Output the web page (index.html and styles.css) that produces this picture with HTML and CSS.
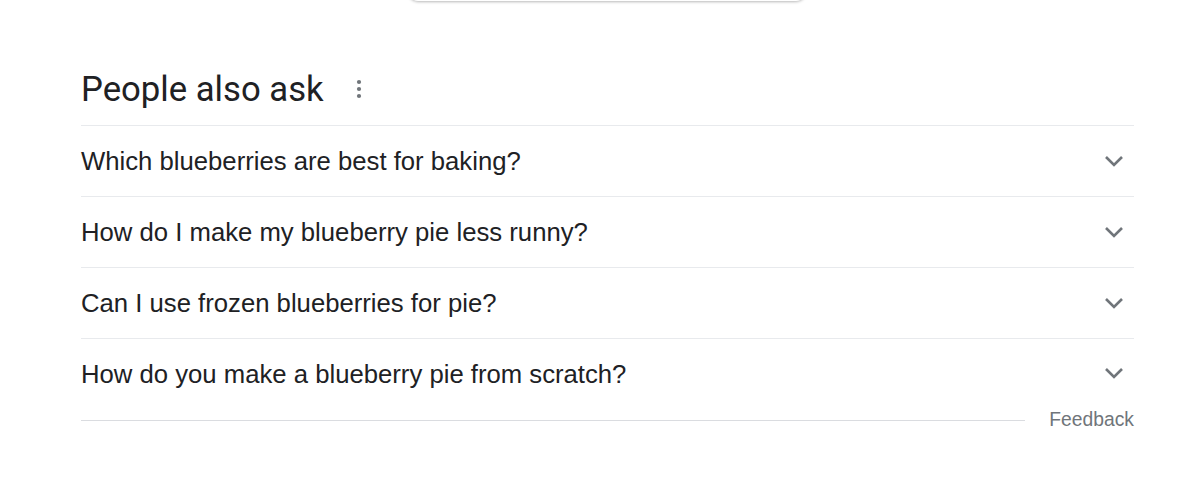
FILE: index.html
```html
<!DOCTYPE html>
<html>
<head>
<meta charset="utf-8">
<link rel="stylesheet" href="styles.css">
</head>
<body>
<div class="topbox"></div>
<div class="paa">
  <div class="head">
    <h2 class="title">People also ask</h2>
    <span class="dots"><svg width="6" height="20" viewBox="0 0 6 20"><circle cx="3" cy="3" r="2.1" fill="#70757a"/><circle cx="3" cy="10" r="2.1" fill="#70757a"/><circle cx="3" cy="17" r="2.1" fill="#70757a"/></svg></span>
  </div>
  <div class="q"><span>Which blueberries are best for baking?</span><svg class="chev" width="20" height="12" viewBox="0 0 20 12"><path d="M2 2 L10 10 L18 2" fill="none" stroke="#70757a" stroke-width="2.6"/></svg></div>
  <div class="q"><span>How do I make my blueberry pie less runny?</span><svg class="chev" width="20" height="12" viewBox="0 0 20 12"><path d="M2 2 L10 10 L18 2" fill="none" stroke="#70757a" stroke-width="2.6"/></svg></div>
  <div class="q"><span>Can I use frozen blueberries for pie?</span><svg class="chev" width="20" height="12" viewBox="0 0 20 12"><path d="M2 2 L10 10 L18 2" fill="none" stroke="#70757a" stroke-width="2.6"/></svg></div>
  <div class="q last"><span>How do you make a blueberry pie from scratch?</span><svg class="chev" width="20" height="12" viewBox="0 0 20 12"><path d="M2 2 L10 10 L18 2" fill="none" stroke="#70757a" stroke-width="2.6"/></svg></div>
  <div class="foot"><div class="line"></div><span class="fb">Feedback</span></div>
</div>
</body>
</html>
```
FILE: styles.css
```css
html, body { margin: 0; padding: 0; background: #fff; }
body { font-family: "Liberation Sans", Arial, sans-serif; color: #202124; position: relative; height: 491px; overflow: hidden; }
.topbox {
  position: absolute; left: 408px; top: -40px; width: 398px; height: 41px;
  border-radius: 0 0 10px 10px; background: #fff;
  box-shadow: 0 1px 3px rgba(0,0,0,0.28);
}
.paa { margin-left: 81px; width: 1053px; padding-top: 61px; }
.head { display: flex; align-items: center; height: 64px; border-bottom: 1px solid #e8eaed; }
.title { margin: 0; font-family: Roboto, "Liberation Sans", sans-serif; font-weight: 400; font-size: 34.7px; letter-spacing: 0; color: #202124; line-height: 48px; position: relative; top: -4px; }
.dots { margin-left: 32px; display: flex; align-items: center; position: relative; top: -4px; }
.q { display: flex; align-items: center; justify-content: space-between; height: 70px; border-bottom: 1px solid #e8eaed; font-family: "Liberation Sans", Arial, sans-serif; font-size: 25.7px; color: #202124; }
.q.last { border-bottom: none; height: 70px; }
.q.last .chev { position: relative; top: -1px; }
.q span { padding-top: 1px; }
.chev { margin-right: 10px; }
.foot { display: flex; align-items: center; height: 24px; margin-top: -1px; }
.line { flex: 1; height: 1px; background: #dadce0; margin-right: 24px; }
.fb { font-family: "Liberation Sans", Arial, sans-serif; font-size: 19.3px; color: #70757a; }
```
